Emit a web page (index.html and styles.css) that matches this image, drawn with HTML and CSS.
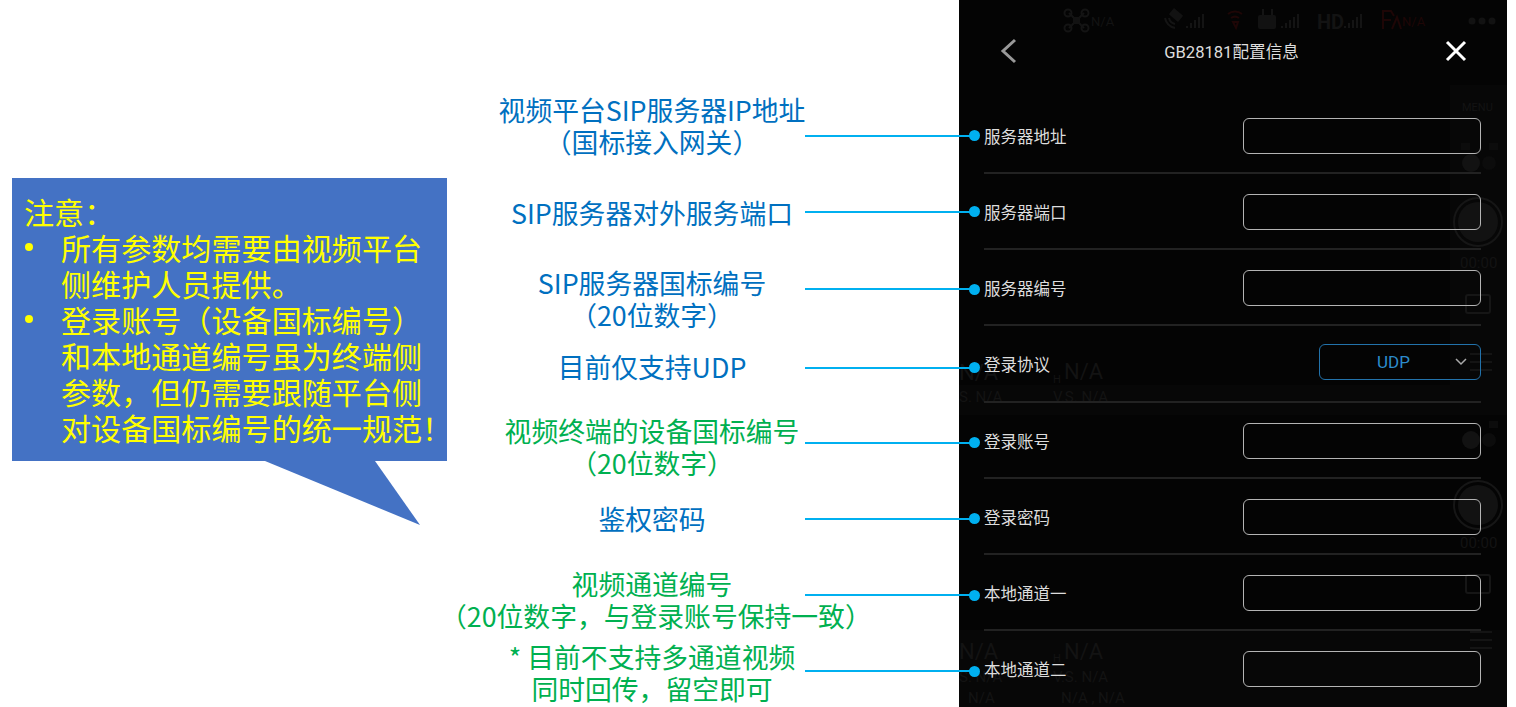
FILE: index.html
```html
<!DOCTYPE html>
<html>
<head>
    <title>GB28181配置信息</title>
    <link rel="stylesheet" href="styles.css">
</head>
<body>
<main class="slide">
    <aside class="callout">
        <p>注意：</p>
        <ul>
            <li><span>所有参数均需要由视频平台<br>侧维护人员提供。</span></li>
            <li><span>登录账号（设备国标编号）<br>和本地通道编号虽为终端侧<br>参数，但仍需要跟随平台侧<br>对设备国标编号的统一规范！</span></li>
        </ul>
    </aside>

    <section class="notes">
        <div class="note-row">
            <p class="note blue note-1">视频平台SIP服务器IP地址<br>（国标接入网关）</p>
            <div class="leader"></div>
        </div>
        <div class="note-row">
            <p class="note blue note-2">SIP服务器对外服务端口</p>
            <div class="leader"></div>
        </div>
        <div class="note-row">
            <p class="note blue note-3">SIP服务器国标编号<br>（20位数字）</p>
            <div class="leader leader-3"></div>
        </div>
        <div class="note-row">
            <p class="note blue note-4">目前仅支持UDP</p>
            <div class="leader leader-4"></div>
        </div>
        <div class="note-row">
            <p class="note green note-5">视频终端的设备国标编号<br>（20位数字）</p>
            <div class="leader leader-low"></div>
        </div>
        <div class="note-row">
            <p class="note blue note-6">鉴权密码</p>
            <div class="leader leader-low"></div>
        </div>
        <div class="note-row">
            <p class="note green note-7">视频通道编号<br>（20位数字，与登录账号保持一致）</p>
            <div class="leader leader-low"></div>
        </div>
        <div class="note-row">
            <p class="note green note-8">* 目前不支持多通道视频<br>同时回传，留空即可</p>
            <div class="leader leader-low"></div>
        </div>
    </section>

    <section class="panel">
        <!-- dimmed camera screen behind the dialog -->
        <svg class="ghost" viewBox="959 0 548 707" width="548" height="707">
            <rect class="ghost-band" x="1450" y="85" width="57" height="300"></rect>
            <rect class="ghost-band" x="959" y="385" width="548" height="30"></rect>
            <rect class="ghost-band" x="959" y="630" width="548" height="77"></rect>

            <g class="ghost-line">
                <path d="M1069 13l5 5M1084 13l-5 5M1069 28l5-5M1084 28l-5-5"></path>
                <circle cx="1068" cy="13" r="3.5"></circle>
                <circle cx="1085" cy="13" r="3.5"></circle>
                <circle cx="1068" cy="28" r="3.5"></circle>
                <circle cx="1085" cy="28" r="3.5"></circle>
                <path d="M1165 18a13 13 0 0 0 10 10M1169 18a8 8 0 0 0 6 6"></path>
                <path d="M1187 28v-2M1191 28v-5M1195 28v-8M1199 28v-11M1203 28v-14"></path>
                <path d="M1282 28v-2M1286 28v-5M1290 28v-8M1294 28v-11M1298 28v-14"></path>
                <path d="M1345 28v-2M1349 28v-5M1353 28v-8M1357 28v-11M1361 28v-14"></path>
                <path d="M1263 15v-6M1272 15v-6"></path>
            </g>
            <rect class="ghost-fill" x="1073" y="17" width="7" height="7"></rect>
            <rect class="ghost-fill" x="1170" y="11" width="12" height="8" transform="rotate(40 1176 15)"></rect>
            <rect class="ghost-fill" x="1258" y="15" width="18" height="14" rx="2"></rect>
            <g class="ghost-red">
                <path d="M1228 14a11 11 0 0 1 14 0M1231 18a7 7 0 0 1 8 0M1233 22h5l-2 6z"></path>
                <path d="M1383 29v-18h8l3 5M1383 20h8M1392 29l5-12 4 12"></path>
            </g>
            <text class="ghost-text small" x="1091" y="26">N/A</text>
            <text class="ghost-bold" x="1317" y="29">HD</text>
            <text class="ghost-text ghost-red-text small" x="1402" y="26">N/A</text>
            <circle class="ghost-fill" cx="1472" cy="21" r="3.5"></circle>
            <circle class="ghost-fill" cx="1482" cy="21" r="3.5"></circle>
            <circle class="ghost-fill" cx="1492" cy="21" r="3.5"></circle>

            <text class="ghost-text tiny" x="1462" y="111">MENU</text>
            <circle class="ghost-fill" cx="1471" cy="163" r="9"></circle>
            <circle class="ghost-dim" cx="1489" cy="163" r="7"></circle>
            <rect class="ghost-dim" x="1461" y="143" width="9" height="7"></rect>
            <rect class="ghost-dim" x="1489" y="143" width="9" height="7"></rect>
            <circle class="ghost-ring" cx="1478" cy="222" r="24"></circle>
            <circle class="ghost-fill" cx="1478" cy="222" r="20"></circle>
            <text class="ghost-text" x="1460" y="268">00:00</text>
            <rect class="ghost-ring" x="1466" y="295" width="24" height="18" rx="2"></rect>
            <g class="ghost-line">
                <path d="M1470 354h22M1470 362h22M1470 370h22"></path>
            </g>

            <circle class="ghost-fill" cx="1471" cy="440" r="9"></circle>
            <circle class="ghost-dim" cx="1489" cy="440" r="7"></circle>
            <rect class="ghost-dim" x="1489" y="421" width="9" height="7"></rect>
            <circle class="ghost-ring" cx="1478" cy="505" r="24"></circle>
            <circle class="ghost-fill" cx="1478" cy="505" r="20"></circle>
            <text class="ghost-text" x="1460" y="548">00:00</text>
            <rect class="ghost-ring" x="1466" y="575" width="24" height="18" rx="2"></rect>
            <g class="ghost-line">
                <path d="M1470 632h22M1470 640h22M1470 648h22"></path>
            </g>

            <text class="ghost-text big" x="959" y="380">N/A</text>
            <text class="ghost-text tiny" x="1053" y="383">H</text>
            <text class="ghost-text big" x="1064" y="379">N/A</text>
            <text class="ghost-text" x="959" y="402">S. N/A</text>
            <text class="ghost-text" x="1053" y="402">V.S. N/A</text>
            <text class="ghost-text big" x="959" y="659">N/A</text>
            <text class="ghost-text tiny" x="1053" y="662">H</text>
            <text class="ghost-text big" x="1064" y="659">N/A</text>
            <text class="ghost-text" x="959" y="682">S. N/A</text>
            <text class="ghost-text" x="1053" y="682">V.S. N/A</text>
            <text class="ghost-text" x="968" y="703">N/A</text>
            <text class="ghost-text" x="1061" y="703">N/A , N/A</text>
        </svg>

        <header class="panel-head">
            <svg class="head-icon" viewBox="0 0 20 26" width="20" height="26">
                <path class="icon-back" d="M16 2L4 13l12 11"></path>
            </svg>
            <h1>GB28181配置信息</h1>
            <svg class="head-icon" viewBox="0 0 24 24" width="24" height="24">
                <path class="icon-close" d="M3 3l18 18M21 3L3 21"></path>
            </svg>
        </header>

        <form class="fields">
            <div class="field"><label>服务器地址</label><div class="box"></div></div>
            <div class="field"><label>服务器端口</label><div class="box"></div></div>
            <div class="field"><label>服务器编号</label><div class="box"></div></div>
            <div class="field">
                <label>登录协议</label>
                <div class="select">
                    <span>UDP</span>
                    <svg class="select-arrow" viewBox="0 0 12 8" width="12" height="8"><path d="M1 1l5 5 5-5"></path></svg>
                </div>
            </div>
            <div class="field"><label>登录账号</label><div class="box"></div></div>
            <div class="field"><label>登录密码</label><div class="box"></div></div>
            <div class="field"><label>本地通道一</label><div class="box"></div></div>
            <div class="field"><label>本地通道二</label><div class="box"></div></div>
        </form>
    </section>
</main>
</body>
</html>
```

FILE: styles.css
```css
html, body {
  margin: 0;
  height: 707px;
  overflow: hidden;
  background-color: #fff;
}

body {
  font-family: "Noto Sans CJK SC", "Noto Sans", sans-serif;
}

.slide {
  display: grid;
  grid-template-columns: 440px 519px 548px;
  height: 707px;
}

/* speech bubble on the left */
.callout {
  position: relative;
  width: 435px;
  height: 283px;
  margin: 178px 0 0 12px;
  padding: 15px 0 0 12px;
  box-sizing: border-box;
  background-color: #4472c4;
  color: #ff0;
  font-size: 30.1px;
  line-height: 36px;
  white-space: nowrap;
}

.callout::after {
  content: "";
  position: absolute;
  top: 100%;
  left: 253px;
  width: 155px;
  height: 64px;
  background-color: #4472c4;
  clip-path: polygon(0 0, 110px 0, 100% 100%);
}

.callout p {
  margin: 0;
}

.callout ul {
  margin: 0;
  padding: 0;
  list-style: none;
}

.callout li {
  display: grid;
  grid-template-columns: 8px 1fr;
  column-gap: 29px;
}

.callout li::before {
  content: "";
  width: 8px;
  height: 8px;
  margin-top: 14px;
  margin-left: 1px;
  border-radius: 50%;
  background-color: #ff0;
}

/* annotations and leader lines */
.notes {
  position: relative;
  z-index: 1;
  display: grid;
  grid-auto-rows: 76.25px;
  padding-top: 97.5px;
}

.note-row {
  display: grid;
  grid-template-columns: 365px 59px 95px;
  grid-template-rows: 76.25px;
  align-items: center;
}

.note {
  grid-column: 1 / 3;
  grid-row: 1;
  margin: 0;
  font-size: 26.8px;
  line-height: 32px;
  text-align: center;
  white-space: nowrap;
}

.blue {
  color: #0070c0;
}

.green {
  color: #00b050;
}

.note-1 { margin-bottom: 20px; }
.note-2 { margin-top: 2px; }
.note-3 { margin-top: 22px; }
.note-4 { margin-top: 6px; }
.note-5 { margin-top: 12px; }
.note-6 { margin-top: 5px; }
.note-7 { margin-top: 14px; }
.note-8 { margin-top: 8px; }

.leader {
  grid-column: 2 / 4;
  grid-row: 1;
  display: flex;
  align-items: center;
  margin-right: -21px;
}

.leader::before {
  content: "";
  flex: 1;
  height: 2px;
  background-color: #00b0f0;
}

.leader::after {
  content: "";
  width: 11px;
  height: 11px;
  margin-left: -1px;
  border-radius: 50%;
  background-color: #00b0f0;
}

.leader-3 { margin-top: 2px; }
.leader-4 { margin-top: 7px; }
.leader-low { margin-top: 4px; }

/* device screen */
.panel {
  position: relative;
  width: 548px;
  height: 707px;
  background-color: #040404;
  color: #ddd;
  overflow: hidden;
}

.ghost {
  position: absolute;
  top: 0;
  left: 0;
}

.ghost-band { fill: #070707; }
.ghost-fill { fill: #121212; }
.ghost-dim { fill: #0c0c0c; }
.ghost-ring { fill: none; stroke: #161616; stroke-width: 2; }
.ghost-line { fill: none; stroke: #141414; stroke-width: 2; }
.ghost-red { fill: none; stroke: #1e0606; stroke-width: 2; }

.ghost-text {
  fill: #131313;
  font-family: Roboto, sans-serif;
  font-size: 15px;
}

.ghost-text.small { font-size: 13px; }
.ghost-text.tiny { font-size: 11px; }
.ghost-text.big { font-size: 22px; }
.ghost-red-text { fill: #1e0606; }

.ghost-bold {
  fill: #131313;
  font-family: Roboto, sans-serif;
  font-size: 20px;
  font-weight: 700;
}

.panel-head {
  position: relative;
  display: flex;
  align-items: center;
  justify-content: space-between;
  height: 97.5px;
  padding: 5px 39px 0 40px;
  box-sizing: border-box;
}

.panel-head h1 {
  margin: 0;
  font-family: Roboto, "Noto Sans CJK SC", sans-serif;
  font-size: 16.6px;
  font-weight: 400;
  color: #ddd;
}

.head-icon {
  fill: none;
}

.icon-back {
  stroke: #999;
  stroke-width: 3;
}

.icon-close {
  stroke: #fff;
  stroke-width: 3;
}

.fields {
  position: relative;
  display: grid;
  grid-auto-rows: 76.25px;
  padding: 0 26px 0 25px;
}

.field {
  display: flex;
  align-items: center;
  justify-content: space-between;
  padding-top: 2px;
  border-bottom: 2px solid #222;
  box-sizing: border-box;
}

.field:last-child {
  border-bottom: 0;
  padding-top: 0;
}

.field label {
  font-size: 16.5px;
  color: #ddd;
}

.box {
  width: 238px;
  height: 36px;
  border: 1.5px solid #b4b4b4;
  border-radius: 6px;
  box-sizing: border-box;
}

.select {
  display: flex;
  align-items: center;
  justify-content: space-between;
  width: 162px;
  height: 36px;
  margin-top: -4px;
  padding: 0 13px 0 57px;
  border: 1.5px solid #2272ab;
  border-radius: 6px;
  box-sizing: border-box;
}

.select span {
  font-family: Roboto, sans-serif;
  font-size: 17px;
  color: #2c8ccc;
}

.select-arrow {
  fill: none;
  stroke: #aaa;
  stroke-width: 1.5;
}
```
